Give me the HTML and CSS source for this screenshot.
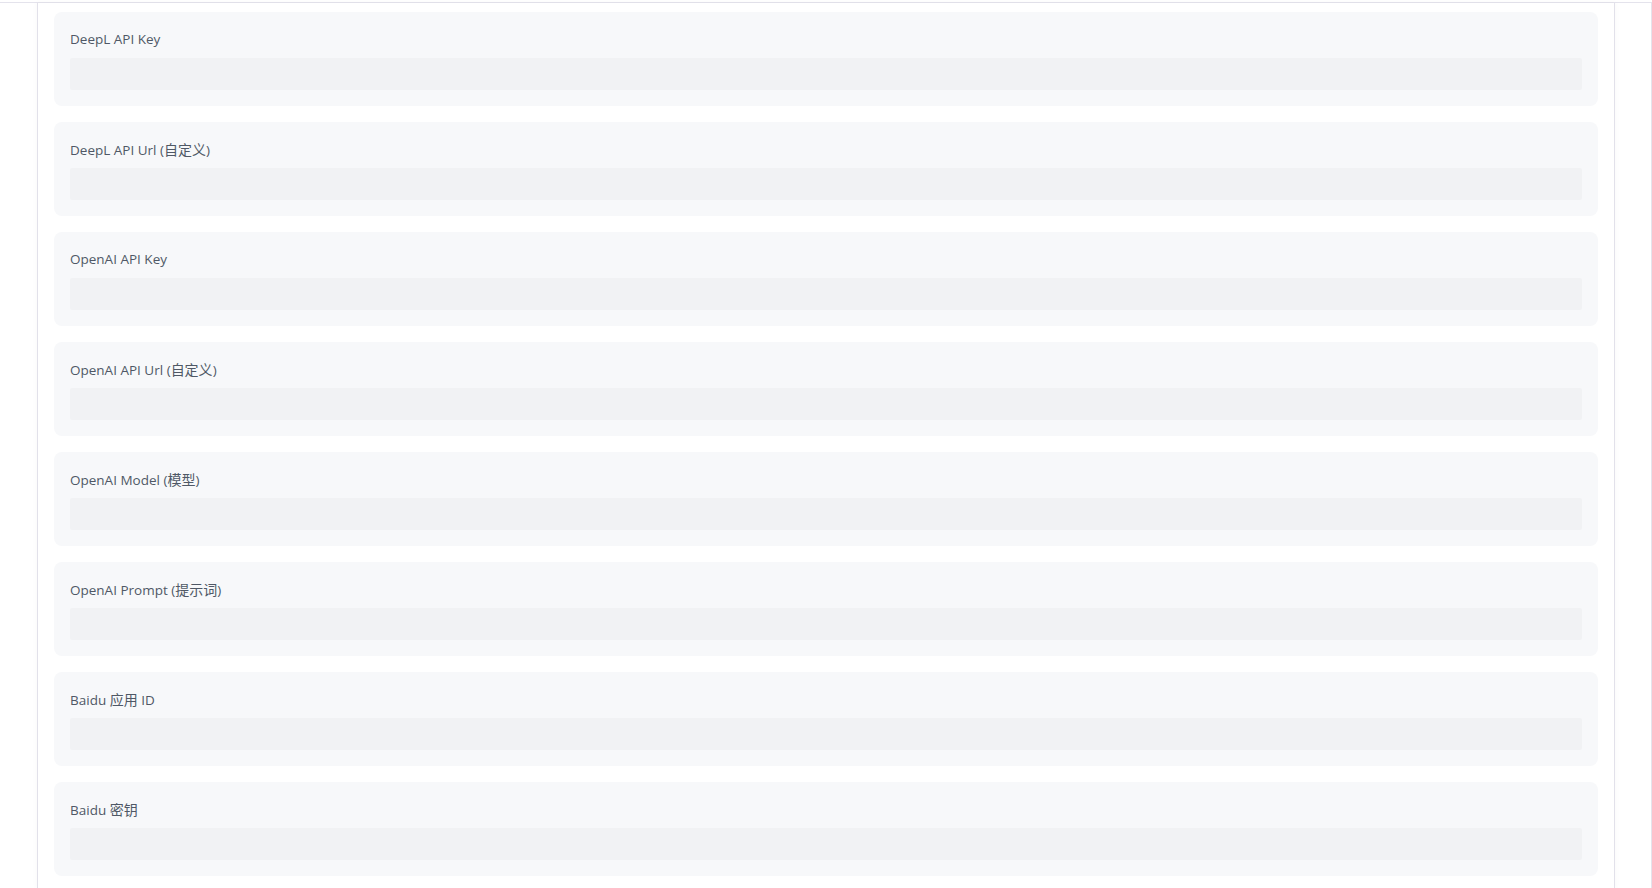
FILE: index.html
```html
<!DOCTYPE html>
<html lang="zh">
<head>
<meta charset="utf-8">
<title>Settings</title>
<link rel="stylesheet" href="styles.css">
</head>
<body>
<div class="frame">
  <div class="panel">
    <div class="field"><label class="label">DeepL API Key</label><div class="input"></div></div>
    <div class="field"><label class="label">DeepL API Url (<span class="cjk">自定义</span>)</label><div class="input"></div></div>
    <div class="field"><label class="label">OpenAI API Key</label><div class="input"></div></div>
    <div class="field"><label class="label">OpenAI API Url (<span class="cjk">自定义</span>)</label><div class="input"></div></div>
    <div class="field"><label class="label">OpenAI Model (<span class="cjk">模型</span>)</label><div class="input"></div></div>
    <div class="field"><label class="label">OpenAI Prompt (<span class="cjk">提示词</span>)</label><div class="input"></div></div>
    <div class="field"><label class="label">Baidu <span class="cjk">应用</span> ID</label><div class="input"></div></div>
    <div class="field"><label class="label">Baidu <span class="cjk">密钥</span></label><div class="input"></div></div>
  </div>
</div>
</body>
</html>
```
FILE: styles.css
```css
html, body {
  margin: 0;
  padding: 0;
  height: 100%;
  background: #ffffff;
  overflow: hidden;
}
body {
  padding-top: 2px;
  box-sizing: border-box;
  font-family: "Open Sans", "Noto Sans CJK SC", sans-serif;
}
.frame {
  height: 100%;
  box-sizing: border-box;
  border-top: 1px solid #e4e3ec;
  border-right: 1px solid #e4e3ec;
  padding-left: 37px;
  padding-right: 36px;
}
.panel {
  height: 100%;
  box-sizing: border-box;
  border-left: 1px solid #e2e1ea;
  border-right: 1px solid #e2e1ea;
  box-shadow: 0 0 6px rgba(0, 0, 0, 0.035);
  padding: 9px 16px 0;
  display: flex;
  flex-direction: column;
  gap: 16px;
}
.field {
  background: #f7f8fa;
  border-radius: 8px;
  padding: 16px;
  display: flex;
  flex-direction: column;
}
.label {
  font-size: 13.5px;
  line-height: 22px;
  height: 22px;
  color: #4f5866;
  margin-bottom: 8px;
}
.cjk {
  font-family: "Noto Sans CJK SC", sans-serif;
  font-size: 14px;
}
.input {
  height: 32px;
  background: #f1f2f4;
  border-radius: 2px;
}
```
